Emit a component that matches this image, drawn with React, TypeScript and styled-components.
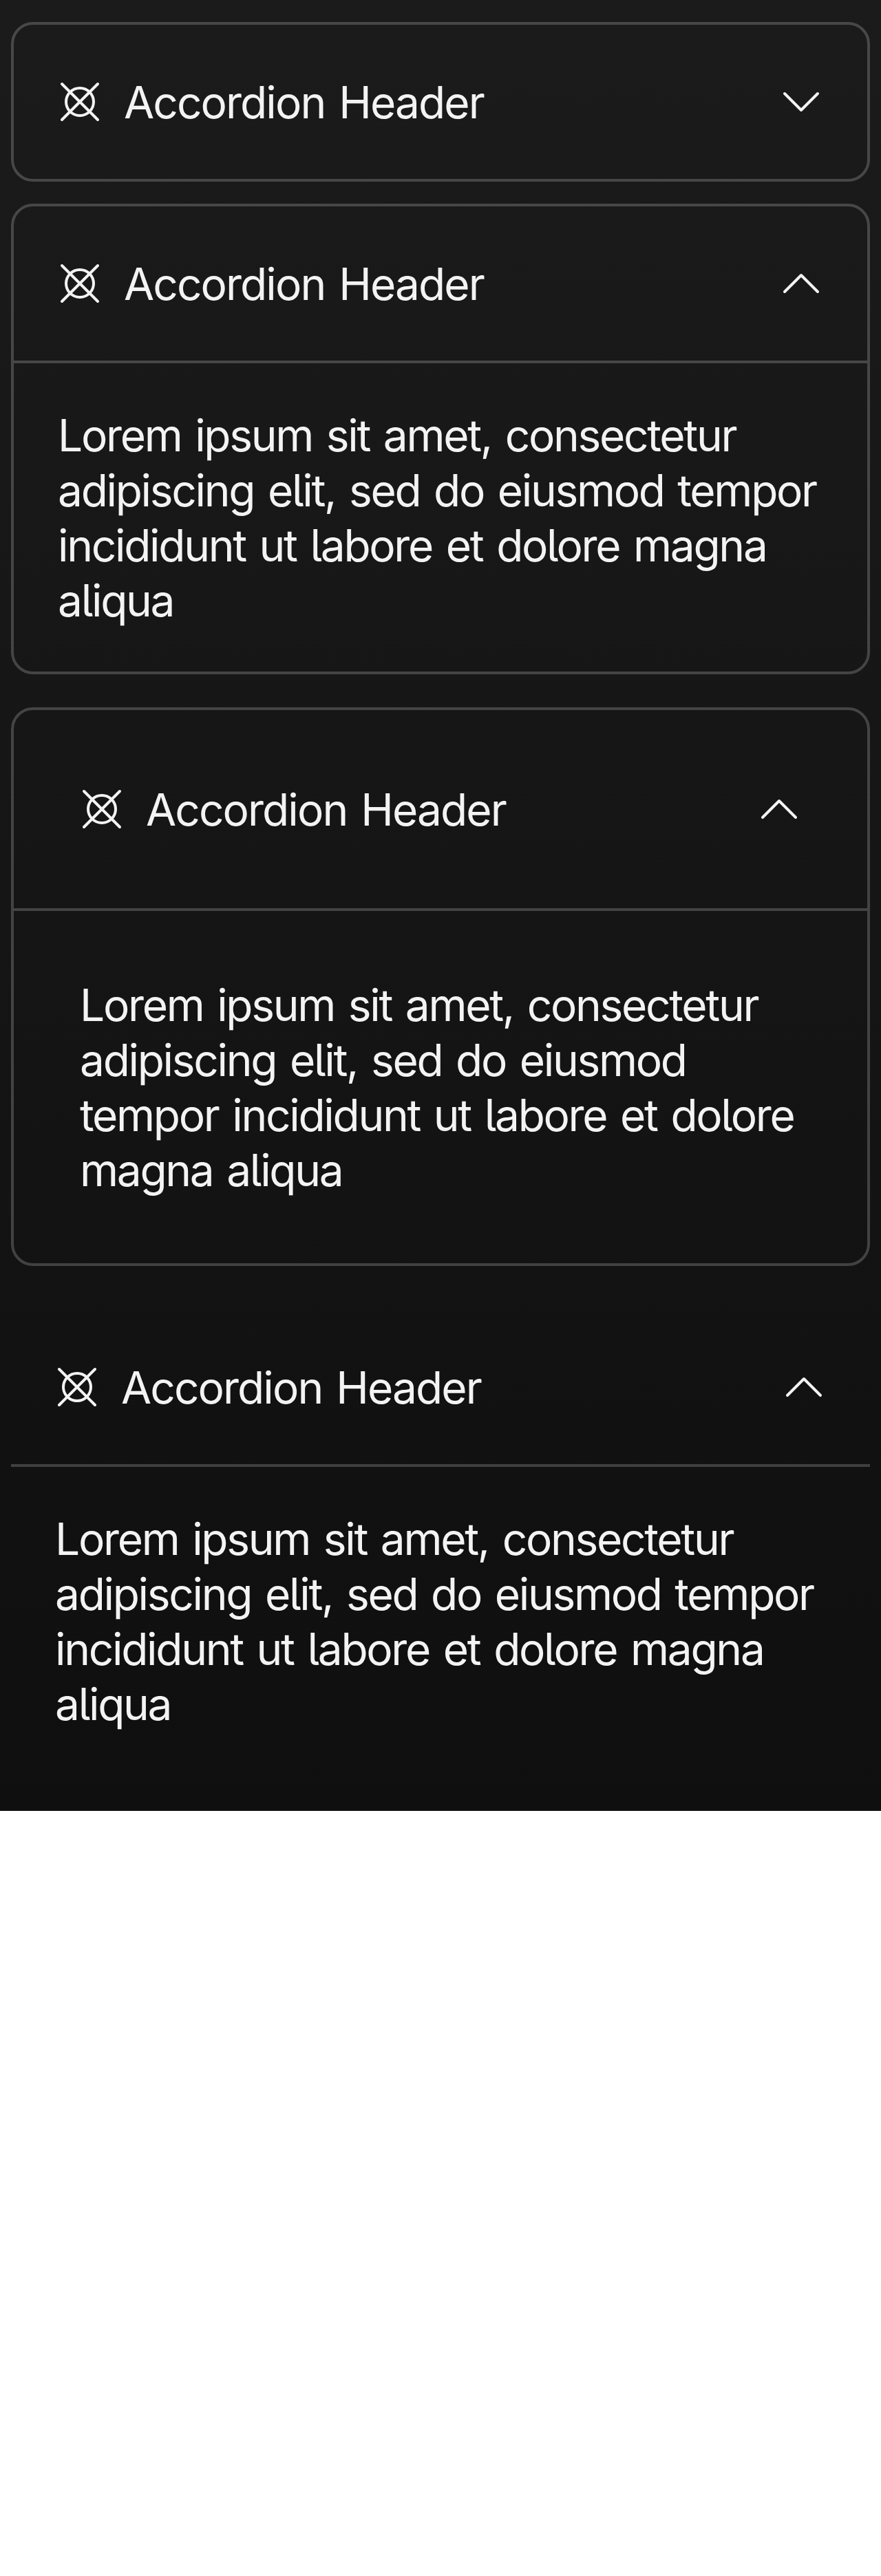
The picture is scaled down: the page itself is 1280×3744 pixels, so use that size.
import React, { useState } from "react";
import styled, { createGlobalStyle } from "styled-components";

const GlobalStyle = createGlobalStyle`
  html, body {
    margin: 0;
    background: #ffffff;
  }
  *, *::before, *::after {
    box-sizing: border-box;
  }
`;

const FOREGROUND = "#f3f3f3";
const BORDER = "rgba(255, 255, 255, 0.2)";

/* The component sheet is laid out at 320px and presented at four times its size. */
const Stage = styled.div`
  width: 1280px;
  height: 3744px;
  overflow: hidden;
`;

const Sheet = styled.main`
  display: flex;
  flex-direction: column;
  width: 320px;
  height: 658px;
  padding: 8px 4px 0;
  transform: scale(4);
  transform-origin: 0 0;
  background: linear-gradient(180deg, #1b1b1b 0%, #0f0f0f 100%);
  color: ${FOREGROUND};
  font-family: Inter, "Liberation Sans", sans-serif;
  font-size: 16px;
  font-weight: 400;
  font-feature-settings: "cv05";
  line-height: 20px;
`;

const Panel = styled.section<{ $bordered: boolean; $gap: number }>`
  flex: none;
  margin-top: ${(p) => p.$gap}px;
  border: ${(p) => (p.$bordered ? `1px solid ${BORDER}` : "0")};
  border-radius: ${(p) => (p.$bordered ? 8 : 0)}px;
`;

const Header = styled.button<{ $inset: number }>`
  display: flex;
  align-items: center;
  gap: 8px;
  width: 100%;
  height: ${(p) => p.$inset * 2 + 24}px;
  padding: 0 ${(p) => p.$inset}px;
  border: 0;
  background: none;
  color: inherit;
  font: inherit;
  font-feature-settings: inherit;
  text-align: left;
  cursor: pointer;
`;

const Title = styled.span`
  flex: 1;
  letter-spacing: -0.48px;
  word-spacing: 1px;
`;

const Icon = styled.svg<{ $flipped?: boolean }>`
  flex: none;
  display: block;
  width: 16px;
  height: 16px;
  fill: none;
  stroke: currentColor;
  stroke-width: 1;
  stroke-linecap: round;
  stroke-linejoin: round;
  transform: ${(p) => (p.$flipped ? "rotate(180deg)" : "none")};
`;

const Body = styled.div<{ $inset: number }>`
  padding: ${(p) => p.$inset}px;
  border-top: 1px solid ${BORDER};
  letter-spacing: -0.575px;
  word-spacing: 1px;
`;

type AccordionProps = {
  title: string;
  text: string;
  defaultOpen?: boolean;
  bordered?: boolean;
  inset?: number;
  gap?: number;
};

function Accordion({
  title,
  text,
  defaultOpen = true,
  bordered = true,
  inset = 16,
  gap = 0,
}: AccordionProps) {
  const [open, setOpen] = useState(defaultOpen);
  return (
    <Panel $bordered={bordered} $gap={gap}>
      <Header $inset={inset} aria-expanded={open} onClick={() => setOpen(!open)}>
        <Icon viewBox="0 0 16 16" aria-hidden="true">
          <circle cx="8" cy="8" r="5" />
          <path d="M1.5 1.5l13 13M14.5 1.5l-13 13" />
        </Icon>
        <Title>{title}</Title>
        <Icon viewBox="0 0 16 16" $flipped={open} aria-hidden="true">
          <path d="M2 5l6 6 6-6" />
        </Icon>
      </Header>
      {open && <Body $inset={inset}>{text}</Body>}
    </Panel>
  );
}

const TITLE = "Accordion Header";
const TEXT =
  "Lorem ipsum sit amet, consectetur adipiscing elit, sed do eiusmod tempor incididunt ut labore et dolore magna aliqua";

export default function App() {
  return (
    <Stage>
      <GlobalStyle />
      <Sheet>
        <Accordion title={TITLE} text={TEXT} defaultOpen={false} />
        <Accordion title={TITLE} text={TEXT} gap={8} />
        <Accordion title={TITLE} text={TEXT} gap={12} inset={24} />
        <Accordion title={TITLE} text={TEXT} gap={16} bordered={false} />
      </Sheet>
    </Stage>
  );
}
